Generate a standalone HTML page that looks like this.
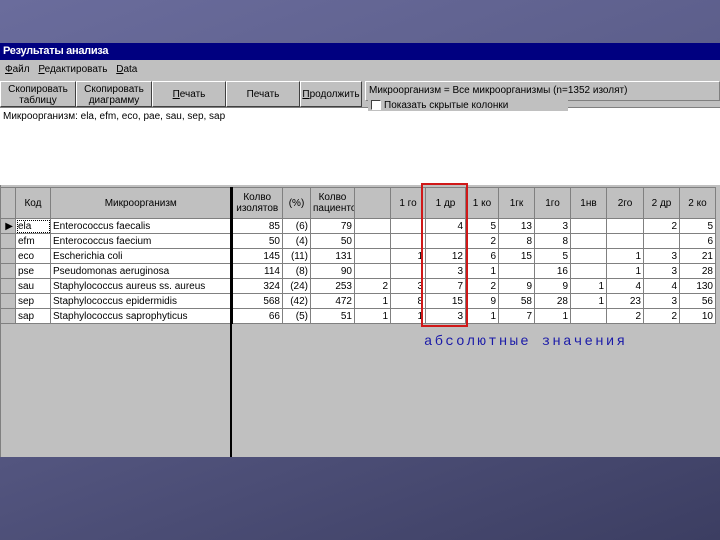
<!DOCTYPE html>
<html><head><meta charset="utf-8"><style>
*{margin:0;padding:0;box-sizing:border-box}
body{width:720px;height:540px;overflow:hidden;position:relative;background:linear-gradient(160deg,#6a6c9c 0%,#5a5c88 45%,#3c3e62 100%);font-family:"Liberation Sans",sans-serif;font-size:10px;color:#000}
.a{position:absolute}
.title{left:0;top:43px;width:720px;height:17px;background:#000080;color:#fff;font-size:11px;font-weight:bold;padding:2px 3px;letter-spacing:-.3px}
.menu{left:0;top:60px;width:720px;height:20px;background:#c0c0c0;padding:4px 5px;font-size:10px;word-spacing:6px}
.tb{left:0;top:80px;width:720px;height:27px;background:#c0c0c0}
.btn{position:absolute;top:1px;height:26px;border:1px solid;border-color:#fff #404040 #404040 #fff;text-align:center;font-size:10px;line-height:11px;padding-top:2px}
.txt{left:0;top:107px;width:720px;height:78px;background:#fff;border-top:1px solid #808080;padding:3px 3px;font-size:10px}
.grid{left:0;top:185px;width:720px;height:272px;background:#c0c0c0}
table{border-collapse:collapse;position:absolute;left:0;top:2px;table-layout:fixed;width:715px}
td{border:1px solid #808080;height:15px;padding:0 2px;text-align:right;font-size:10px;white-space:nowrap;overflow:hidden;background:#fff}
tr.h td{height:31px;background:#c0c0c0;text-align:center;line-height:11px;border-color:#808080}
td.s{background:#c0c0c0}
td.l{text-align:left}
</style></head><body>
<div class="a title">Результаты анализа</div>
<div class="a menu"><u>Ф</u>айл <u>Р</u>едактировать <u>D</u>ata</div>
<div class="a tb">
<div class="btn" style="left:0;width:76px">Скопировать<br>таблицу</div>
<div class="btn" style="left:76px;width:76px">Скопировать<br>диаграмму</div>
<div class="btn" style="left:152px;width:74px;line-height:22px"><u>П</u>ечать</div>
<div class="btn" style="left:226px;width:74px;line-height:22px">Печать</div>
<div class="btn" style="left:300px;width:62px;line-height:22px"><u>П</u>родолжить</div>
<div class="a" style="left:365px;top:1px;width:355px;height:20px;border:1px solid;border-color:#fff #808080 #808080 #fff;padding:3px 3px;font-size:10px">Микроорганизм = Все микроорганизмы (n=1352 изолят)</div>
<div class="a" style="left:368px;top:20px;width:200px;height:11px;background:#c0c0c0;font-size:10px;padding-left:16px;line-height:11px;z-index:2">Показать скрытые колонки<span class="a" style="left:3px;top:0;width:10px;height:10px;background:#fff;border:1px solid;border-color:#404040 #fff #fff #404040"></span></div>
</div>
<div class="a txt">Микроорганизм: ela, efm, eco, pae, sau, sep, sap</div>
<div class="a grid">
<table>
<colgroup><col style="width:15px"><col style="width:35px"><col style="width:181px"><col style="width:51px"><col style="width:28px"><col style="width:44px"><col style="width:36px"><col style="width:35px"><col style="width:40px"><col style="width:33px"><col style="width:36px"><col style="width:36px"><col style="width:36px"><col style="width:37px"><col style="width:36px"><col style="width:36px"></colgroup>
<tr class="h"><td></td><td>Код</td><td style="border-right:2px solid #000">Микроорганизм</td><td>Колво<br>изолятов</td><td>(%)</td><td>Колво<br>пациенто</td><td></td><td>1 го</td><td>1 др</td><td>1 ко</td><td>1гк</td><td>1го</td><td>1нв</td><td>2го</td><td>2 др</td><td>2 ко</td></tr>
<tr><td class="s">▶</td><td class="l" style="outline:1px dotted #000;outline-offset:-2px">ela</td><td class="l" style="border-right:2px solid #000">Enterococcus faecalis</td><td>85</td><td>(6)</td><td>79</td><td></td><td></td><td>4</td><td>5</td><td>13</td><td>3</td><td></td><td></td><td>2</td><td>5</td></tr>
<tr><td class="s"></td><td class="l">efm</td><td class="l" style="border-right:2px solid #000">Enterococcus faecium</td><td>50</td><td>(4)</td><td>50</td><td></td><td></td><td></td><td>2</td><td>8</td><td>8</td><td></td><td></td><td></td><td>6</td></tr>
<tr><td class="s"></td><td class="l">eco</td><td class="l" style="border-right:2px solid #000">Escherichia coli</td><td>145</td><td>(11)</td><td>131</td><td></td><td>1</td><td>12</td><td>6</td><td>15</td><td>5</td><td></td><td>1</td><td>3</td><td>21</td></tr>
<tr><td class="s"></td><td class="l">pse</td><td class="l" style="border-right:2px solid #000">Pseudomonas aeruginosa</td><td>114</td><td>(8)</td><td>90</td><td></td><td></td><td>3</td><td>1</td><td></td><td>16</td><td></td><td>1</td><td>3</td><td>28</td></tr>
<tr><td class="s"></td><td class="l">sau</td><td class="l" style="border-right:2px solid #000">Staphylococcus aureus ss. aureus</td><td>324</td><td>(24)</td><td>253</td><td>2</td><td>3</td><td>7</td><td>2</td><td>9</td><td>9</td><td>1</td><td>4</td><td>4</td><td>130</td></tr>
<tr><td class="s"></td><td class="l">sep</td><td class="l" style="border-right:2px solid #000">Staphylococcus epidermidis</td><td>568</td><td>(42)</td><td>472</td><td>1</td><td>8</td><td>15</td><td>9</td><td>58</td><td>28</td><td>1</td><td>23</td><td>3</td><td>56</td></tr>
<tr><td class="s"></td><td class="l">sap</td><td class="l" style="border-right:2px solid #000">Staphylococcus saprophyticus</td><td>66</td><td>(5)</td><td>51</td><td>1</td><td>1</td><td>3</td><td>1</td><td>7</td><td>1</td><td></td><td>2</td><td>2</td><td>10</td></tr>
</table>
<div class="a" style="left:230px;top:2px;width:2px;height:270px;background:#000"></div>
<div class="a" style="left:0;top:0;width:1px;height:272px;background:#808080"></div>
</div>
<div class="a" style="left:421px;top:183px;width:47px;height:144px;border:2px solid #d01818"></div>
<div class="a" style="left:424px;top:334px;font-family:'Liberation Mono',monospace;font-size:14px;letter-spacing:2.3px;color:#1a1aa8">абсолютные значения</div>
</body></html>
